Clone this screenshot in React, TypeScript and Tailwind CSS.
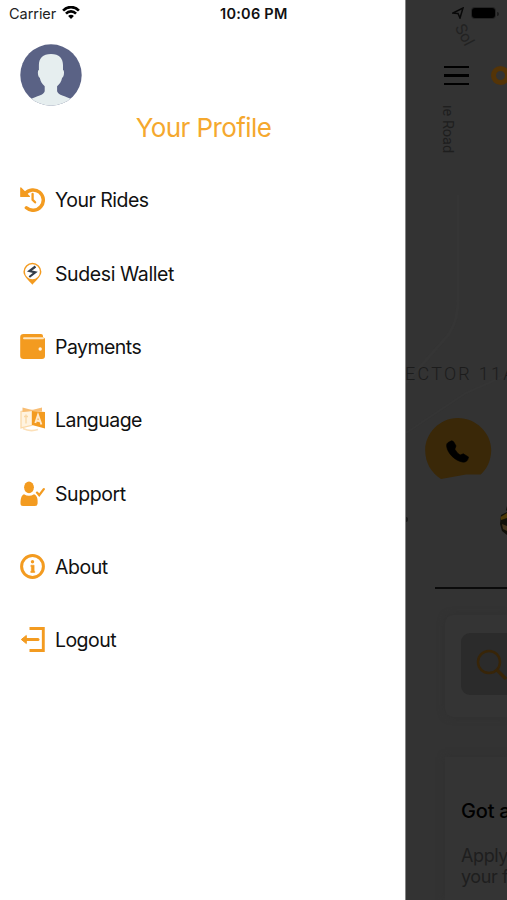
import type { ReactNode } from "react";

const ORANGE = "#f39b20";

function HistoryIcon() {
  return (
    <svg viewBox="0 0 25 25" className="size-[25px]" fill="none">
      <path d="M5.200 6.600A10.200 10.200 0 1 1 6.400 20.800" stroke={ORANGE} strokeWidth="3.500" strokeLinecap="round" />
      <path d="M.8 1v8.400h8.600z" fill={ORANGE} stroke={ORANGE} strokeWidth="1.200" strokeLinejoin="round" />
      <path d="M12.600 7v5.700l2.500 2.600" stroke={ORANGE} strokeWidth="2.300" strokeLinecap="round" />
    </svg>
  );
}

function PinIcon() {
  return (
    <svg viewBox="0 0 25 25" className="size-[25px]">
      <path fillRule="evenodd" d="M12.400 23.800C11 21.500 3.400 15.800 3.400 10.800a9 9 0 0 1 18 0C21.400 15.800 13.800 21.500 12.400 23.800zM12.400 3.300a7.500 7.500 0 1 0 0 15 7.500 7.500 0 0 0 0-15z" fill={ORANGE} />
      <path d="M15.500 5.500 9.500 10l5.800 1.400-6 4.600" fill="none" stroke="#343d49" strokeWidth="2.200" />
    </svg>
  );
}

function WalletIcon() {
  return (
    <svg viewBox="0 0 25 25" className="size-[25px]">
      <path d="M3.500 0H21a2 2 0 0 1 2 2v1.500h.300A1.700 1.700 0 0 1 25 5.200V22a3 3 0 0 1-3 3H3.500A3.300 3.300 0 0 1 .2 21.700V3.300A3.300 3.300 0 0 1 3.500 0z" fill={ORANGE} />
      <path d="M4 4.300h19" stroke="#ffe6bf" strokeWidth="1.900" strokeLinecap="round" />
      <circle cx="20.200" cy="15" r="1.700" fill="#fff2df" />
    </svg>
  );
}

function LanguageIcon() {
  return (
    <svg viewBox="0 0 25 25" className="size-[25px]" fill="none">
      <path d="m1 4.500 11-1.200v15L1 21z" fill="#fff3e0" stroke="#fbd9a8" strokeWidth="1.300" />
      <path d="m2.500 .5 9.500 2.500 10-2.500v4l-10-.5-9.500 1z" fill="#f8bd73" />
      <path d="m12 4 13 1v16.500l-13-3.500z" fill="#f39b20" />
      <path d="m15.300 16 2.700-8 3.400 9.500M16.300 13.500l4 .8" stroke="#ffe9ca" strokeWidth="1.900" />
      <path d="M4 9.500h4M6 7.500v9" stroke="#f9d7a4" strokeWidth="1.300" />
      <path d="M3 21.500q7 3.500 15 1" stroke="#fce0b9" strokeWidth="1.700" />
    </svg>
  );
}

function SupportIcon() {
  return (
    <svg viewBox="0 0 25 25" className="size-[25px]">
      <ellipse cx="9" cy="6.300" rx="4.900" ry="5.900" fill={ORANGE} />
      <path d="M4 13.200q5 3 10 0c3 1.300 4 4.500 3.600 9.300Q17.500 25 15 25H3Q.5 25 .5 22.500C.5 17.500 1.400 14.200 4 13.200z" fill={ORANGE} />
      <path d="m17 11.600 2.200 2.600 4.600-6.100" fill="none" stroke={ORANGE} strokeWidth="2.300" strokeLinecap="round" />
    </svg>
  );
}

function AboutIcon() {
  return (
    <svg viewBox="0 0 25 25" className="size-[25px]">
      <circle cx="12.500" cy="12.500" r="10.900" fill="none" stroke={ORANGE} strokeWidth="3" />
      <circle cx="12.500" cy="7.800" r="1.700" fill={ORANGE} />
      <path d="M10.900 11.200h3.200v6h.6v1.300h-3.900v-1.300h.6v-4.600h-.5z" fill={ORANGE} stroke={ORANGE} strokeWidth=".6" />
    </svg>
  );
}

function LogoutIcon() {
  return (
    <svg viewBox="0 0 25 25" className="size-[25px]">
      <path d="M9.500 1.500h13.800v22H9.500" fill="none" stroke={ORANGE} strokeWidth="2.900" />
      <path d="M5 12.500h13" stroke={ORANGE} strokeWidth="3" strokeLinecap="round" />
      <path d="m1.300 12.500 5-4v8z" fill={ORANGE} stroke={ORANGE} strokeLinejoin="round" />
    </svg>
  );
}

const items: { label: string; icon: ReactNode; tracking: string }[] = [
  { label: "Your Rides", icon: <HistoryIcon />, tracking: "tracking-[-0.5px]" },
  { label: "Sudesi Wallet", icon: <PinIcon />, tracking: "tracking-[-0.4px]" },
  { label: "Payments", icon: <WalletIcon />, tracking: "tracking-[-0.550px]" },
  { label: "Language", icon: <LanguageIcon />, tracking: "tracking-[-0.550px]" },
  { label: "Support", icon: <SupportIcon />, tracking: "tracking-[-0.4px]" },
  { label: "About", icon: <AboutIcon />, tracking: "tracking-[-0.450px]" },
  { label: "Logout", icon: <LogoutIcon />, tracking: "tracking-[-0.550px]" },
];

function Avatar() {
  return (
    <svg viewBox="0 0 62 62" className="block size-[62px]">
      <defs>
        <clipPath id="avatar">
          <circle cx="31" cy="31" r="30.700" />
        </clipPath>
      </defs>
      <g clipPath="url(#avatar)">
        <path d="M0 0h62v62H0z" fill="#5a6285" />
        <path d="M31 10c8.300 0 12 4.500 12 11v5c1.800.2 1 7.500-.9 7.800-.7 4-2.500 6.300-5 8.500v5c1 4 8 4.500 14.900 8.200V66H10V55.500c7-3.700 13.800-4.200 14.700-8.200v-5c-2.400-2.200-4.200-4.500-4.900-8.500-1.900-.3-2.700-7.600-.9-7.800v-5c0-6.500 3.800-11 12.100-11z" fill="#e6eeef" />
      </g>
    </svg>
  );
}

function Drawer() {
  return (
    <aside className="flex w-[406px] shrink-0 flex-col border-r border-[#858585] bg-white">
      <div className="flex h-[28px] items-center pl-[9px]">
        <span className="w-[53px] text-[14.500px] tracking-[-0.050px] whitespace-nowrap text-[#222]">Carrier</span>
        <svg viewBox="0 0 20 15" className="h-[14px] w-[18px] -translate-y-px" preserveAspectRatio="none" fill="none" stroke="#000" strokeWidth="2.900">
          <path d="M1.200 4.900a12.300 12.300 0 0 1 17.600 0M4.400 8.200a7.800 7.800 0 0 1 11.200 0" />
          <path d="M6.800 10.800a4.500 4.500 0 0 1 6.400 0l-3.200 3.200z" fill="#000" stroke="none" />
        </svg>
        <span className="ml-[140px] text-[14.500px] font-semibold tracking-[0.250px] whitespace-nowrap text-[#111]">10:06 PM</span>
      </div>
      <div className="mt-[16px] pl-[20px]">
        <Avatar />
      </div>
      <h1 className="mt-[6px] pl-[2px] text-center text-[26px] leading-[32px] tracking-[-0.6px] text-[#f5a82e]">Your Profile</h1>
      <nav className="mt-[19.300px] flex flex-col">
        {items.map((item) => (
          <a key={item.label} className="flex h-[73.330px] items-center gap-[10px] pl-[20px]">
            {item.icon}
            <span className={"pt-[2px] text-[19.500px] whitespace-nowrap text-[#111] " + item.tracking}>{item.label}</span>
          </a>
        ))}
      </nav>
    </aside>
  );
}

function MapArea() {
  return (
    <div className="relative h-[486px] shrink-0">
      <svg viewBox="0 0 101 486" className="absolute inset-0 h-full w-full" fill="none">
        <path d="M52 72v105q0 20-9 34L0 260" stroke="#353535" strokeWidth="3" />
        <path d="M0 310 60 270 101 252" stroke="#353535" strokeWidth="2" />
        <path d="M19.200 327c0-16 14-32 32.500-32s33.500 15 33.500 32c0 11-5 20-10.500 24.500l-14.700.1-25 4.400c-9.500-6-15.800-16-15.800-29z" fill="#3a2808" />
        <path d="M43.500 318.800q2.600-2.200 4.500.4l2 3.800-1.200 3.200q2.300 4.200 5.300 5.800l3.200-1.200 5.200 3.200q-.8 6-6.300 5c-7-1.300-14.500-8.500-15.500-15.300-.4-3 .7-4.100 2.800-4.900z" fill="#000" stroke="#000" strokeWidth=".6" />
      </svg>
    </div>
  );
}

function Backdrop() {
  return (
    <main className="relative flex min-w-0 flex-1 flex-col overflow-hidden bg-[#333]">
      <div className="flex h-[28px] shrink-0 items-center pl-[46px]">
        <svg viewBox="0 0 12 12" className="size-[12px] -translate-y-px" fill="none" stroke="#080808" strokeWidth="1.500">
          <path d="m1 6 10-5-3 10-2-4.500z" />
        </svg>
        <div className="ml-[8px] h-[10px] w-[23px] -translate-y-px rounded-[3px] bg-black ring-1 ring-[#242424]" />
        <div className="ml-[2px] h-[4px] w-[1.500px] rounded-r bg-[#1c1c1c]" />
      </div>
      <div className="flex h-[95px] shrink-0 items-center pl-[38px]">
        <div className="flex w-[25px] shrink-0 flex-col gap-[6px]">
          <span className="h-[2.500px] bg-black" />
          <span className="h-[2.500px] bg-black" />
          <span className="h-[2.500px] bg-black" />
        </div>
        <div className="ml-[22px] size-[19px] shrink-0 rounded-full border-[5px] border-[#543407]" />
      </div>
      <span className="absolute top-[26px] left-[47px] rotate-[62deg] font-['Roboto',sans-serif] text-[16px] leading-[18px] text-[#222]">Sol</span>
      <span className="absolute top-[105px] left-[34px] font-['Roboto',sans-serif] text-[14.500px] leading-[15px] whitespace-nowrap text-[#1e1e1e] [writing-mode:vertical-rl]">ıe Road</span>
      <MapArea />
      <span className="absolute top-[363px] left-[-1px] font-['Roboto',sans-serif] text-[18px] leading-[21px] font-light tracking-[2.250px] whitespace-nowrap text-[#1c1c1c]">ECTOR 11A</span>
      <svg viewBox="0 0 8 36" className="absolute top-[506px] left-[93px] h-[36px] w-[8px]">
        <path d="M8 0v5l-1-1zM2 9l6-3v23l-5-4-2-7z" fill="#111009" />
        <path d="M1.500 11 8 7v5l-6 2z" fill="#4d3908" />
        <path d="m3 18 5 2v5l-4-2z" fill="#44351d" />
      </svg>
      <div className="absolute top-[517px] left-0 h-[5px] w-[2px] rounded-r bg-[#1b1b1b]" />
      <section className="flex min-h-0 flex-1 flex-col">
        <div className="-mt-[22px] ml-[29px] h-[2px] shrink-0 bg-[#0b0b0b]" />
        <div className="mt-[26px] ml-[39px] h-[102px] shrink-0 rounded-l-[8px] bg-[#343434] pt-[18px] pl-[16px] shadow-[0_0_7px_#303030]">
          <div className="flex h-[62px] items-center rounded-l-[9px] bg-[#2b2b2b] pl-[15px]">
            <svg viewBox="0 0 31 31" className="size-[31px] shrink-0" fill="none" stroke="#382508" strokeWidth="2.500">
              <circle cx="13" cy="13" r="11" />
              <path d="m21 21 9 9" strokeWidth="3.200" />
            </svg>
          </div>
        </div>
        <div className="mt-[40px] ml-[39px] flex-1 bg-[#343434] pt-[41px] pl-[16px] whitespace-nowrap shadow-[0_0_7px_#303030]">
          <h2 className="text-[20px] leading-[26px] font-medium tracking-[-0.2px] text-black">Got a</h2>
          <p className="mt-[21px] text-[18px] leading-[21px] tracking-[-0.4px] text-[#1e1e1e]">Apply<br />your f</p>
        </div>
      </section>
    </main>
  );
}

export default function App() {
  return (
    <div className="flex h-[900px] w-[507px] overflow-hidden bg-white font-['Inter','Liberation_Sans',sans-serif]">
      <Drawer />
      <Backdrop />
    </div>
  );
}
